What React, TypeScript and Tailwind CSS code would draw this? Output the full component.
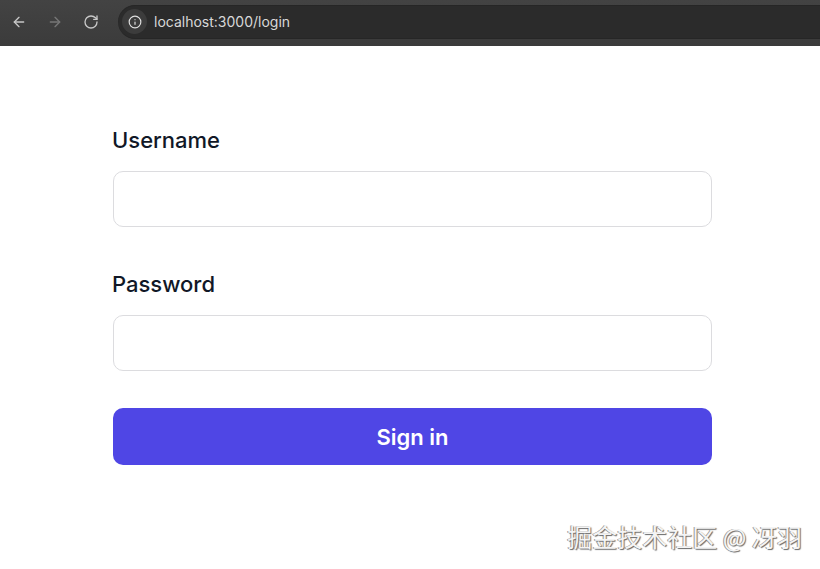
import { ArrowLeft, ArrowRight, Info, RotateCw } from "lucide-react";

function Field({ label }: { label: string }) {
  return (
    <div className="flex flex-col">
      <label className="-ml-[1px] h-[33px] text-[22px] leading-[33px] font-medium text-[#111827]">{label}</label>
      <input className="mt-[14px] h-[56px] w-full rounded-[10px] border-[1.5px] border-[#dcdcdf] bg-white" />
    </div>
  );
}

export default function App() {
  return (
    <div className="relative h-[569px] w-[820px] overflow-hidden bg-white font-['Inter',sans-serif]">
      <div className="flex h-[46px] items-center bg-gradient-to-b from-[#434343] to-[#3b3b3b] pb-[3px]">
        <div className="flex w-[118px] items-center gap-[20px] pl-[11px]">
          <ArrowLeft className="h-4 w-4 text-[#c8c8c8]" />
          <ArrowRight className="h-4 w-4 text-[#777777]" />
          <RotateCw className="h-4 w-4 text-[#c8c8c8]" />
        </div>
        <div className="flex h-[34px] flex-1 items-center rounded-l-[17px] border-y border-[#262626] bg-[#2b2b2b]">
          <div className="ml-[4px] flex h-[25px] w-[25px] items-center justify-center rounded-full bg-[#3c3c3c]">
            <Info className="h-[14px] w-[14px] text-[#e0e0e0]" />
          </div>
          <span className="ml-[7px] text-[14px] text-[#d8d8d8]">localhost:3000/login</span>
        </div>
      </div>

      <form className="ml-[113px] flex w-[599px] flex-col gap-[41px] pt-[78px]">
        <Field label="Username" />
        <Field label="Password" />
        <button
          type="button"
          className="-mt-[4px] h-[57px] rounded-[10px] bg-[#4f46e5] pt-[1px] text-[22px] font-semibold text-white"
        >
          Sign in
        </button>
      </form>

      <span className="absolute right-[18px] bottom-[18px] font-['Noto_Sans_CJK_SC',sans-serif] text-[25px] leading-[30px] text-[#f4f4f4] [text-shadow:1px_1px_1px_#666666,-1px_0_0_#999999]">
        掘金技术社区 @ 冴羽
      </span>
    </div>
  );
}
